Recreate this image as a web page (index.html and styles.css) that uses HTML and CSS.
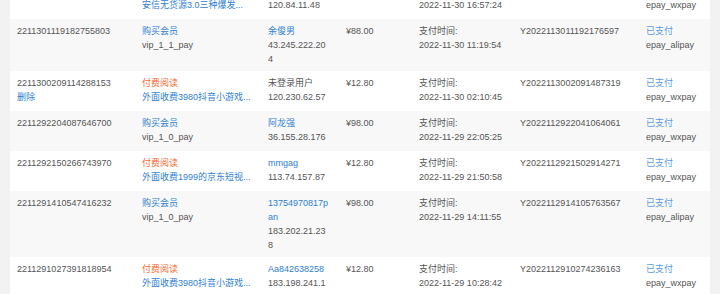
FILE: index.html
```html
<!DOCTYPE html>
<html lang="zh-CN">
<head>
<meta charset="utf-8">
<title>订单列表</title>
<link rel="stylesheet" href="styles.css">
</head>
<body>
<div class="page">
  <div class="card">
    <table class="orders">
      <colgroup>
        <col class="c-no"><col class="c-type"><col class="c-user"><col class="c-amt"><col class="c-time"><col class="c-trade"><col class="c-status">
      </colgroup>
      <tbody>
        <tr>
          <td>2211301657248812390</td>
          <td class="type"><span class="orange">付费阅读</span><span class="link ellip">安信无货源3.0三种爆发...</span></td>
          <td><span class="link">xiaoyu88</span><br>120.84.11.48</td>
          <td>¥12.80</td>
          <td class="nw">支付时间:<br>2022-11-30 16:57:24</td>
          <td>Y2022113016572431856</td>
          <td class="nw"><span class="paid">已支付</span><br>epay_wxpay</td>
        </tr>
        <tr>
          <td>2211301119182755803</td>
          <td class="type"><span class="link">购买会员</span><br>vip_1_1_pay</td>
          <td><span class="link">余俊男</span><br>43.245.222.204</td>
          <td>¥88.00</td>
          <td class="nw">支付时间:<br>2022-11-30 11:19:54</td>
          <td>Y2022113011192176597</td>
          <td class="nw"><span class="paid">已支付</span><br>epay_alipay</td>
        </tr>
        <tr>
          <td>2211300209114288153<br><span class="link">删除</span></td>
          <td class="type"><span class="orange">付费阅读</span><span class="link ellip">外面收费3980抖音小游戏...</span></td>
          <td>未登录用户<br>120.230.62.57</td>
          <td>¥12.80</td>
          <td class="nw">支付时间:<br>2022-11-30 02:10:45</td>
          <td>Y2022113002091487319</td>
          <td class="nw"><span class="paid">已支付</span><br>epay_wxpay</td>
        </tr>
        <tr>
          <td>2211292204087646700</td>
          <td class="type"><span class="link">购买会员</span><br>vip_1_0_pay</td>
          <td><span class="link">阿龙强</span><br>36.155.28.176</td>
          <td>¥98.00</td>
          <td class="nw">支付时间:<br>2022-11-29 22:05:25</td>
          <td>Y2022112922041064061</td>
          <td class="nw"><span class="paid">已支付</span><br>epay_wxpay</td>
        </tr>
        <tr>
          <td>2211292150266743970</td>
          <td class="type"><span class="orange">付费阅读</span><span class="link ellip">外面收费1999的京东短视...</span></td>
          <td><span class="link">mmgag</span><br>113.74.157.87</td>
          <td>¥12.80</td>
          <td class="nw">支付时间:<br>2022-11-29 21:50:58</td>
          <td>Y2022112921502914271</td>
          <td class="nw"><span class="paid">已支付</span><br>epay_wxpay</td>
        </tr>
        <tr>
          <td>2211291410547416232</td>
          <td class="type"><span class="link">购买会员</span><br>vip_1_0_pay</td>
          <td><span class="link">13754970817pan</span><br>183.202.21.238</td>
          <td>¥98.00</td>
          <td class="nw">支付时间:<br>2022-11-29 14:11:55</td>
          <td>Y2022112914105763567</td>
          <td class="nw"><span class="paid">已支付</span><br>epay_alipay</td>
        </tr>
        <tr>
          <td>2211291027391818954</td>
          <td class="type"><span class="orange">付费阅读</span><span class="link ellip">外面收费3980抖音小游戏...</span></td>
          <td><span class="link">Aa842638258</span><br>183.198.241.156</td>
          <td>¥12.80</td>
          <td class="nw">支付时间:<br>2022-11-29 10:28:42</td>
          <td>Y2022112910274236163</td>
          <td class="nw"><span class="paid">已支付</span><br>epay_wxpay</td>
        </tr>
      </tbody>
    </table>
  </div>
</div>
</body>
</html>
```

FILE: styles.css
```css
html, body {
  margin: 0;
  padding: 0;
  background: #f2f2f2;
  overflow: hidden;
}

.page {
  padding: 0 10px;
  height: 294px;
  overflow: hidden;
}

.card {
  background: #fff;
  margin-top: -21px;
}

.orders {
  width: 700px;
  table-layout: fixed;
  border-collapse: collapse;
  font-family: "Liberation Sans", "Noto Sans CJK SC", sans-serif;
  font-size: 9px;
  line-height: 14px;
  color: #555;
}

.c-no { width: 125px; }
.c-type { width: 126px; }
.c-user { width: 78px; }
.c-amt { width: 73px; }
.c-time { width: 101px; }
.c-trade { width: 126px; }
.c-status { width: 71px; }

.orders td {
  height: 30px;
  padding: 5px 10px 5px 7px;
  vertical-align: top;
  word-break: break-all;
}

.orders td.type {
  padding-right: 0;
  overflow: hidden;
}

.orders tr:nth-child(even) td {
  background: #f8f8f8;
}

.orders td.nw {
  white-space: nowrap;
  word-break: normal;
}

.link {
  color: #2f80d2;
}

.orange {
  color: #f36b35;
  display: block;
}

.ellip {
  display: block;
  white-space: nowrap;
  overflow: hidden;
}

.paid {
  color: #5a9ce2;
}
```
